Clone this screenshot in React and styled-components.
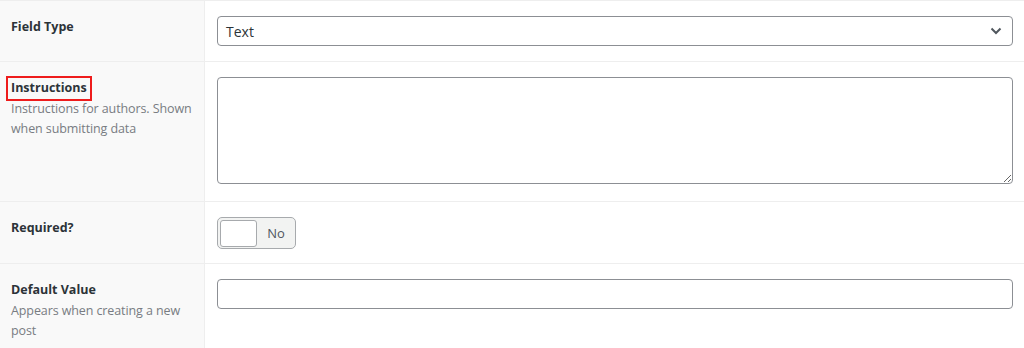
import React from "react";
import styled, { createGlobalStyle } from "styled-components";

const Global = createGlobalStyle`
  html, body { margin: 0; padding: 0; background: #fff; }
  body { font-family: "Open Sans", "Noto Sans", sans-serif; font-size: 13px; color: #1d2327; }
  * { box-sizing: border-box; }
`;

const Table = styled.div`
  width: 1024px;
  border-top: 1px solid #eeeeee;
`;

const Row = styled.div`
  display: grid;
  grid-template-columns: 205px 1fr;
  border-bottom: ${(p) => (p.$last ? "none" : "1px solid #eeeeee")};
`;

const LabelCell = styled.div`
  background: #f9f9f9;
  border-right: 1px solid #eeeeee;
  padding: 16px 8px 15px 11px;
`;

const Label = styled.span`
  display: inline-block;
  font-weight: 700;
  font-size: 12.5px;
  line-height: 18px;
  color: #2c3338;
  outline: ${(p) => (p.$marked ? "2px solid #ee1c1c" : "none")};
  outline-offset: ${(p) => (p.$marked ? "1px" : "0")};
  padding: ${(p) => (p.$marked ? "0 2px 1px" : "0")};
  margin: ${(p) => (p.$marked ? "-2px 0 -1px -2px" : "0")};
`;

const Desc = styled.p`
  margin: 2px 0 0;
  font-size: 12.5px;
  line-height: 20px;
  color: #787c82;
  white-space: nowrap;
  letter-spacing: -0.1px;
`;

const InputCell = styled.div`
  padding: 15px 11px ${(p) => p.$pb ?? 15}px 12px;
  min-height: ${(p) => p.$minH || 0}px;
`;

const SelectBox = styled.div`
  position: relative;
  height: 30px;
  border: 1px solid #8c8f94;
  border-radius: 4px;
  display: flex;
  align-items: center;
  padding: 0 8px;
  font-size: 14px;
  color: #2c3338;
  background: #fff;
`;

const Chevron = styled.svg`
  position: absolute;
  right: 10px;
  top: 10px;
`;

const TextArea = styled.textarea`
  display: block;
  width: 100%;
  height: 107px;
  border: 1px solid #8c8f94;
  border-radius: 4px;
  resize: vertical;
  font-family: inherit;
  font-size: 14px;
  background: #fff;
  margin: 0 0 2px;
`;

const TextInput = styled.input`
  display: block;
  width: 100%;
  height: 30px;
  border: 1px solid #8c8f94;
  border-radius: 4px;
  background: #fff;
  margin: 0;
  font-family: inherit;
`;

const Switch = styled.div`
  display: flex;
  align-items: center;
  width: 79px;
  height: 32px;
  border: 1px solid #a7aaad;
  border-radius: 5px;
  background: #f2f3f2;
  padding: 0 2px;
`;

const Slider = styled.div`
  width: 37px;
  height: 27px;
  background: #fff;
  border: 1px solid #a7aaad;
  border-radius: 3px;
`;

const SwitchText = styled.span`
  flex: 1;
  text-align: center;
  font-size: 13px;
  color: #50575e;
  padding-left: 2px;
`;

export default function App() {
  return (
    <>
      <Global />
      <Table>
        <Row>
          <LabelCell>
            <Label>Field Type</Label>
          </LabelCell>
          <InputCell>
            <SelectBox>
              Text
              <Chevron width="12" height="8" viewBox="0 0 12 8">
                <path d="M1.5 1.5 L6 6 L10.5 1.5" fill="none" stroke="#50575e" strokeWidth="2" />
              </Chevron>
            </SelectBox>
          </InputCell>
        </Row>
        <Row>
          <LabelCell>
            <Label $marked>Instructions</Label>
            <Desc>
              Instructions for authors. Shown
              <br />
              when submitting data
            </Desc>
          </LabelCell>
          <InputCell>
            <TextArea />
          </InputCell>
        </Row>
        <Row>
          <LabelCell>
            <Label>Required?</Label>
          </LabelCell>
          <InputCell $pb={14}>
            <Switch>
              <Slider />
              <SwitchText>No</SwitchText>
            </Switch>
          </InputCell>
        </Row>
        <Row $last>
          <LabelCell>
            <Label>Default Value</Label>
            <Desc>
              Appears when creating a new
              <br />
              post
            </Desc>
          </LabelCell>
          <InputCell $minH={90}>
            <TextInput />
          </InputCell>
        </Row>
      </Table>
    </>
  );
}
